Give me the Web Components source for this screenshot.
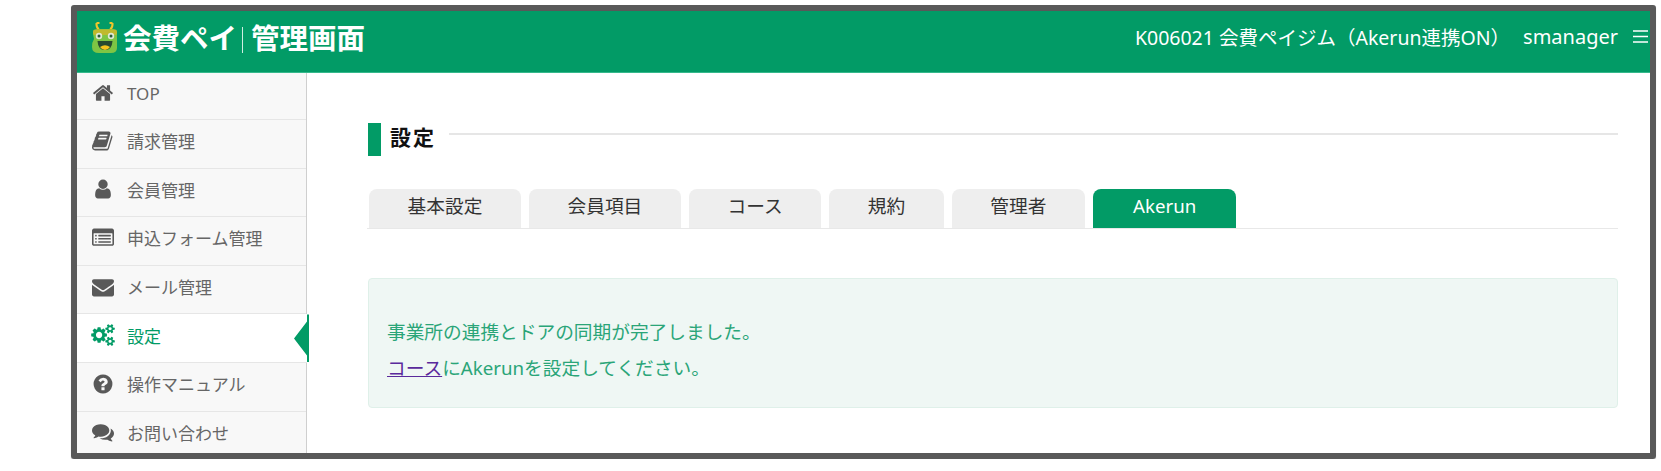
<!DOCTYPE html>
<html lang="ja">
<head>
<meta charset="utf-8">
<title>設定</title>
<style>
  html, body { margin: 0; background: #fff; }
  body { font-family: "Noto Sans", "Noto Sans CJK JP", sans-serif; }
</style>
</head>
<body>
<app-frame>
  <app-header slot="header" shop="K006021 会費ペイジム（Akerun連携ON）" user="smanager"></app-header>
  <side-nav slot="side">
    <nav-item icon="home" label="TOP"></nav-item>
    <nav-item icon="book" label="請求管理"></nav-item>
    <nav-item icon="user" label="会員管理"></nav-item>
    <nav-item icon="form" label="申込フォーム管理"></nav-item>
    <nav-item icon="mail" label="メール管理"></nav-item>
    <nav-item icon="cogs" label="設定" active></nav-item>
    <nav-item icon="help" label="操作マニュアル"></nav-item>
    <nav-item icon="chat" label="お問い合わせ"></nav-item>
  </side-nav>
  <page-title>設定</page-title>
  <tab-bar>
    <tab-item>基本設定</tab-item>
    <tab-item>会員項目</tab-item>
    <tab-item>コース</tab-item>
    <tab-item>規約</tab-item>
    <tab-item>管理者</tab-item>
    <tab-item active>Akerun</tab-item>
  </tab-bar>
  <alert-box>
    <div>事業所の連携とドアの同期が完了しました。</div>
    <div><a href="#" style="color:#5a2a9c">コース</a>にAkerunを設定してください。</div>
  </alert-box>
</app-frame>

<script>
const ICONS = {
  home: ['0 0 1792 1792', 'M1472 992v480q0 26-19 45t-45 19h-384v-384h-256v384h-384q-26 0-45-19t-19-45v-480q0-1 .5-3t.5-3l575-474 575 474q1 2 1 6zm223-69l-62 74q-8 9-21 11h-3q-13 0-21-7l-692-577-692 577q-12 8-24 7-13-2-21-11l-62-74q-8-10-7-23.500t11-21.500l719-599q32-26 76-26t76 26l244 204v-195q0-14 9-23t23-9h192q14 0 23 9t9 23v408l219 182q10 8 11 21.500t-7 23.500z'],
  book: ['0 0 1792 1792', 'M1639 478q40 57 18 129l-275 906q-19 64-76.500 107.500t-122.500 43.500h-923q-77 0-148.500-53.500t-99.500-131.500q-24-67-2-127 0-4 3-27t4-37q1-8-3-21.500t-3-19.500q2-11 8-21t16.500-23.500 16.500-23.500q23-38 45-91.500t30-91.500q3-10 .5-30t-.5-28q3-11 17-28t17-23q21-36 42-92t25-90q1-9-2.500-32t.5-28q4-13 22-30.500t22-22.500q19-26 42.500-84.500t27.500-96.500q1-8-3-25.500t-2-26.500q2-8 9-18t18-23 17-21q8-12 16.500-30.500t15-35 16-36 19.500-32 26.500-23.500 36-11.500 47.500 5.500l-1 3q38-9 51-9h761q74 0 114 56t18 130l-274 906q-36 119-71.500 153.500t-128.500 34.500h-869q-27 0-38 15-11 16-1 43 24 70 144 70h923q29 0 56-15.500t35-41.500l300-987q7-22 5-57 38 15 59 43zm-1064 2q-4 13 2 22.500t20 9.500h608q13 0 25.500-9.500t16.500-22.500l21-64q4-13-2-22.500t-20-9.500h-608q-13 0-25.500 9.500t-16.500 22.500zm-83 256q-4 13 2 22.500t20 9.500h608q13 0 25.500-9.500t16.500-22.500l21-64q4-13-2-22.500t-20-9.500h-608q-13 0-25.500 9.500t-16.500 22.500z'],
  user: ['0 0 1792 1792', 'M1536 1399q0 109-62.500 187t-150.500 78h-854q-88 0-150.500-78t-62.500-187q0-85 8.500-160.500t31.500-152 58.500-131 94-89 134.500-34.500q131 128 313 128t313-128q76 0 134.500 34.500t94 89 58.500 131 31.500 152 8.500 160.500zm-256-887q0 159-112.500 271.500t-271.500 112.500-271.500-112.500-112.500-271.500 112.500-271.500 271.500-112.500 271.500 112.500 112.500 271.500z'],
  form: ['0 0 1792 1792', 'M384 1184v64q0 13-9.500 22.500t-22.500 9.500h-64q-13 0-22.500-9.500t-9.500-22.500v-64q0-13 9.500-22.500t22.500-9.500h64q13 0 22.500 9.500t9.500 22.500zm0-256v64q0 13-9.500 22.500t-22.500 9.500h-64q-13 0-22.500-9.500t-9.500-22.500v-64q0-13 9.500-22.500t22.500-9.500h64q13 0 22.500 9.500t9.500 22.500zm0-256v64q0 13-9.500 22.500t-22.500 9.500h-64q-13 0-22.500-9.500t-9.500-22.500v-64q0-13 9.500-22.500t22.500-9.500h64q13 0 22.500 9.500t9.500 22.500zm1152 512v64q0 13-9.500 22.500t-22.500 9.500h-960q-13 0-22.500-9.500t-9.500-22.500v-64q0-13 9.500-22.500t22.500-9.500h960q13 0 22.500 9.500t9.500 22.500zm0-256v64q0 13-9.500 22.500t-22.500 9.500h-960q-13 0-22.500-9.500t-9.500-22.500v-64q0-13 9.500-22.500t22.500-9.500h960q13 0 22.500 9.500t9.500 22.500zm0-256v64q0 13-9.500 22.500t-22.500 9.500h-960q-13 0-22.500-9.500t-9.500-22.500v-64q0-13 9.500-22.500t22.500-9.500h960q13 0 22.500 9.500t9.500 22.500zm128 704v-832q0-13-9.500-22.500t-22.500-9.500h-1472q-13 0-22.500 9.500t-9.500 22.500v832q0 13 9.500 22.500t22.500 9.500h1472q13 0 22.500-9.500t9.500-22.500zm128-1088v1088q0 66-47 113t-113 47h-1472q-66 0-113-47t-47-113v-1088q0-66 47-113t113-47h1472q66 0 113 47t47 113z'],
  mail: ['0 0 1792 1792', 'M1792 710v794q0 66-47 113t-113 47h-1472q-66 0-113-47t-47-113v-794q44 49 101 87 362 246 497 345 57 42 92.500 65.500t94.500 48 110 24.500h2q51 0 110-24.500t94.500-48 92.500-65.500q170-123 498-345 57-39 100-87zm0-294q0 79-49 151t-122 123q-376 261-468 325-10 7-42.500 30.500t-54 38-52 32.500-57.500 27-50 9h-2q-23 0-50-9t-57.500-27-52-32.500-54-38-42.500-30.500q-91-64-262-182.500t-205-142.500q-62-42-117-115.500t-55-136.500q0-78 41.500-130t118.500-52h1472q65 0 112.500 47t47.500 113z'],
  cogs: ['0 0 1920 1792', 'M896 896q0-106-75-181t-181-75-181 75-75 181 75 181 181 75 181-75 75-181zm768 512q0-52-38-90t-90-38-90 38-38 90q0 53 37.500 90.500t90.500 37.500 90.500-37.500 37.500-90.500zm0-1024q0-52-38-90t-90-38-90 38-38 90q0 53 37.500 90.500t90.500 37.500 90.500-37.500 37.500-90.500zm-384 421v185q0 10-7 19.500t-16 10.500l-155 24q-11 35-32 76 34 48 90 115 7 11 7 20 0 12-7 19-23 30-82.500 89.500t-78.500 59.500q-11 0-21-7l-115-90q-37 19-77 31-11 108-23 155-7 24-30 24h-186q-11 0-20-7.500t-10-17.500l-23-153q-34-10-75-31l-118 89q-7 7-20 7-11 0-21-8-144-133-144-160 0-9 7-19 10-14 41-53t47-61q-23-44-35-82l-152-24q-10-1-17-9.500t-7-19.500v-185q0-10 7-19.500t16-10.500l155-24q11-35 32-76-34-48-90-115-7-11-7-20 0-12 7-20 22-30 82-89t79-59q11 0 21 7l115 90q34-18 77-32 11-108 23-154 7-24 30-24h186q11 0 20 7.500t10 17.500l23 153q34 10 75 31l118-89q8-7 20-7 11 0 21 8 144 133 144 160 0 8-7 19-12 16-42 54t-45 60q23 48 34 82l152 23q10 2 17 10.500t7 19.500zm640 533v140q0 16-149 31-12 27-30 52 51 113 51 138 0 4-4 7-122 71-124 71-8 0-46-47t-52-68q-20 2-30 2t-30-2q-14 21-52 68t-46 47q-2 0-124-71-4-3-4-7 0-25 51-138-18-25-30-52-149-15-149-31v-140q0-16 149-31 13-29 30-52-51-113-51-138 0-4 4-7 4-2 35-20t59-34 30-16q8 0 46 46.500t52 67.500q20-2 30-2t30 2q51-71 92-112l6-2q4 0 124 70 4 3 4 7 0 25-51 138 17 23 30 52 149 15 149 31zm0-1024v140q0 16-149 31-12 27-30 52 51 113 51 138 0 4-4 7-122 71-124 71-8 0-46-47t-52-68q-20 2-30 2t-30-2q-14 21-52 68t-46 47q-2 0-124-71-4-3-4-7 0-25 51-138-18-25-30-52-149-15-149-31v-140q0-16 149-31 13-29 30-52-51-113-51-138 0-4 4-7 4-2 35-20t59-34 30-16q8 0 46 46.500t52 67.500q20-2 30-2t30 2q51-71 92-112l6-2q4 0 124 70 4 3 4 7 0 25-51 138 17 23 30 52 149 15 149 31z'],
  help: ['0 0 1792 1792', 'M1024 1376v-192q0-14-9-23t-23-9h-192q-14 0-23 9t-9 23v192q0 14 9 23t23 9h192q14 0 23-9t9-23zm256-672q0-88-55.500-163t-138.500-116-170-41q-243 0-371 213-15 24 8 42l132 100q7 6 19 6 16 0 25-12 53-68 86-92 34-24 86-24 48 0 85.500 26t37.500 59q0 38-20 61t-68 45q-63 28-115.500 86.500t-52.500 125.500v36q0 14 9 23t23 9h192q14 0 23-9t9-23q0-19 21.500-49.500t54.500-49.500q32-18 49-28.500t46-35 44.500-48 28-60.500 12.500-81zm384 192q0 209-103 385.500t-279.500 279.500-385.500 103-385.500-103-279.500-279.500-103-385.500 103-385.500 279.500-279.500 385.500-103 385.500 103 279.500 279.500 103 385.500z'],
  chat: ['0 0 1792 1792', 'M1408 768q0 139-94 257t-256.500 186.500-353.500 68.500q-86 0-176-16-124 88-278 128-36 9-86 16h-3q-11 0-20.500-8t-11.500-21q-1-3-1-6.500t.5-6.500 2-6l2.500-5 3.500-5.500 4-5 4.500-5 4-4.500q5-6 23-25t26-29.500 22.500-29 25-38.500 20.500-44q-124-72-195-177t-71-224q0-139 94-257t256.500-186.500 353.500-68.500 353.500 68.500 256.500 186.500 94 257zm384 256q0 120-71 224.500t-195 176.500q10 24 20.500 44t25 38.500 22.500 29 26 29.500 23 25q1 1 4 4.500t4.500 5 4 5 3.500 5.500l2.500 5 2 6 .5 6.500-1 6.500q-3 14-13 22t-22 7q-50-7-86-16-154-40-278-128-90 16-176 16-271 0-472-132 58 4 88 4 161 0 309-45t264-129q125-92 192-212t67-254q0-77-23-152 129 71 204 178t75 230z']
};

class AppFrame extends HTMLElement {
  connectedCallback() {
    this.attachShadow({ mode: 'open' });
    this.shadowRoot.innerHTML = `
      <style>
        :host {
          display: block;
          box-sizing: border-box;
          width: 1585px;
          height: 454px;
          margin: 5px 0 0 71px;
          border: 6px solid #595959;
          border-radius: 3px;
          box-shadow: 0 1px 1px #ccc;
          overflow: hidden;
        }
        .body { display: flex; height: 380px; }
        main { flex: 1; min-width: 0; padding: 50px 32px 0 61px; background: #fff; }
      </style>
      <slot name="header"></slot>
      <div class="body">
        <slot name="side"></slot>
        <main><slot></slot></main>
      </div>
    `;
  }
}
customElements.define('app-frame', AppFrame);

class AppHeader extends HTMLElement {
  connectedCallback() {
    this.attachShadow({ mode: 'open' });
    this.shadowRoot.innerHTML = `
      <style>
        :host {
          display: flex;
          align-items: center;
          justify-content: space-between;
          box-sizing: border-box;
          height: 62px;
          padding: 0 2px 4px 14px;
          background: #029b66;
          border-bottom: 1px solid #35b98c;
          color: #fff;
        }
        .logo { display: flex; align-items: center; gap: 4px; }
        .name {
          font-family: "Noto Sans CJK JP", sans-serif;
          font-size: 28.500px;
          font-weight: 700;
          line-height: 40px;
          white-space: nowrap;
          margin-top: -5px;
        }
        .sep { display: inline-block; width: 1px; height: 26px; background: #cfeee2; margin: 0 8px 0 5px; vertical-align: -4px; }
        .info { display: flex; align-items: center; font-size: 20px; white-space: nowrap; margin-top: -6px; }
        .shop { font-size: 19.500px; }
        .user { margin-left: 13px; }
        svg.menu { margin-left: 15px; }
        svg.frog { margin-top: -6px; }
      </style>
      <div class="logo">
        <svg class="frog" width="28" height="32" viewBox="0 0 28 32">
          <path d="M8 9 Q5 6 5.500 2 M19 9 Q22 6 21.500 2 M5.500 2 h3 M21.500 2 h-3" fill="none" stroke="#f0c52a" stroke-width="2"/>
          <path d="M2 13 Q2 8 8 8 H20 Q26 8 26 13 V27 Q26 32 20 32 H8 Q1 32 1 26 Q1 21 3 18z" fill="#7ec544"/>
          <rect x="2" y="8.500" width="24" height="5.500" rx="2" fill="#c0b92d"/>
          <circle cx="8" cy="15" r="3.200" fill="#dfe9d4"/><circle cx="20" cy="15" r="3.200" fill="#dfe9d4"/>
          <circle cx="8" cy="15" r="1.500" fill="#2b5a3a"/><circle cx="20" cy="15" r="1.500" fill="#2b5a3a"/>
          <path d="M6.500 20 H21.500 Q21 29 14 29 Q7 29 6.500 20z" fill="#274a30"/>
          <path d="M9 26 Q14 22.500 19 26 Q17 29 14 29 Q11 29 9 26z" fill="#f6c51d"/>
        </svg>
        <span class="name">会費ペイ<span class="sep"></span>管理画面</span>
      </div>
      <div class="info">
        <span class="shop">${this.getAttribute('shop')}</span>
        <span class="user">${this.getAttribute('user')}</span>
        <svg class="menu" width="15" height="13" viewBox="0 0 15 13"><path d="M0 1h15M0 6.500h15M0 12h15" stroke="#fff" stroke-width="1.500"/></svg>
      </div>
    `;
  }
}
customElements.define('app-header', AppHeader);

class SideNav extends HTMLElement {
  connectedCallback() {
    this.attachShadow({ mode: 'open' });
    this.shadowRoot.innerHTML = `
      <style>
        :host {
          display: block;
          box-sizing: border-box;
          flex: 0 0 230px;
          width: 230px;
          height: 380px;
          background: #f8f8f8;
          border-right: 1px solid #cfcfcf;
        }
      </style>
      <slot></slot>
    `;
  }
}
customElements.define('side-nav', SideNav);

class NavItem extends HTMLElement {
  connectedCallback() {
    const [box, d] = ICONS[this.getAttribute('icon')];
    const wide = this.getAttribute('icon') === 'cogs' ? 24 : 22;
    this.attachShadow({ mode: 'open' });
    this.shadowRoot.innerHTML = `
      <style>
        :host {
          display: flex;
          align-items: center;
          position: relative;
          box-sizing: border-box;
          height: 48.600px;
          padding: 0 0 6px 14px;
          border-bottom: 1px solid #e6e6e6;
          color: #666;
          font-size: 17px;
          white-space: nowrap;
        }
        :host(:first-child) { height: 47px; }
        :host([active]) {
          background: #fff;
          color: #029b66;
          margin-right: -1px;
        }
        .ic { width: 24px; flex: none; display: flex; justify-content: center; margin-right: 12px; }
        svg { fill: #595959; }
        :host([active]) svg { fill: #029b66; }
        .arrow { display: none; }
        :host([active]) .arrow {
          display: block;
          position: absolute;
          right: -2px;
          top: 0;
          width: 15px;
          height: 48px;
          background: #029b66;
          clip-path: polygon(13px 0, 15px 0, 15px 100%, 13px 100%, 13px 41px, 0 24px, 13px 7px);
        }
      </style>
      <span class="ic"><svg width="${wide}" height="22" viewBox="${box}"><path d="${d}"/></svg></span>
      <span>${this.getAttribute('label')}</span>
      <span class="arrow"></span>
    `;
  }
}
customElements.define('nav-item', NavItem);

class PageTitle extends HTMLElement {
  connectedCallback() {
    this.attachShadow({ mode: 'open' });
    this.shadowRoot.innerHTML = `
      <style>
        :host {
          display: flex;
          height: 33px;
          margin-bottom: 33px;
          color: #111;
        }
        .bar { width: 13px; background: #029b66; flex: none; }
        h1 {
          margin: 0 0 0 9px;
          font: 700 21px/28px "Noto Sans", "Noto Sans CJK JP", sans-serif;
          letter-spacing: 2px;
        }
        .rule { flex: 1; height: 2px; margin: 10px 0 0 13px; background: #e6e6e6; }
      </style>
      <span class="bar"></span>
      <h1><slot></slot></h1>
      <span class="rule"></span>
    `;
  }
}
customElements.define('page-title', PageTitle);

class TabBar extends HTMLElement {
  connectedCallback() {
    this.attachShadow({ mode: 'open' });
    this.shadowRoot.innerHTML = `
      <style>
        :host {
          display: flex;
          gap: 8px;
          padding-left: 2px;
          margin-left: -1px;
          border-bottom: 1px solid #e8e8e8;
        }
      </style>
      <slot></slot>
    `;
  }
}
customElements.define('tab-bar', TabBar);

class TabItem extends HTMLElement {
  connectedCallback() {
    this.attachShadow({ mode: 'open' });
    this.shadowRoot.innerHTML = `
      <style>
        :host {
          display: block;
          box-sizing: border-box;
          height: 39px;
          padding: 0 38.600px;
          background: #eee;
          border-radius: 8px 8px 0 0;
          color: #333;
          font-size: 18.700px;
          line-height: 34px;
          white-space: nowrap;
        }
        :host([active]) { background: #029b66; color: #fff; padding: 0 40px; }
      </style>
      <slot></slot>
    `;
  }
}
customElements.define('tab-item', TabItem);

class AlertBox extends HTMLElement {
  connectedCallback() {
    this.attachShadow({ mode: 'open' });
    this.shadowRoot.innerHTML = `
      <style>
        :host {
          display: block;
          box-sizing: border-box;
          height: 130px;
          margin-top: 49px;
          padding: 35px 18px 0 18px;
          background: #eff7f4;
          border: 1px solid #dff0e9;
          border-radius: 4px;
          color: #2aa578;
          font-size: 18.700px;
          line-height: 36px;
        }
      </style>
      <slot></slot>
    `;
  }
}
customElements.define('alert-box', AlertBox);
</script>
</body>
</html>
